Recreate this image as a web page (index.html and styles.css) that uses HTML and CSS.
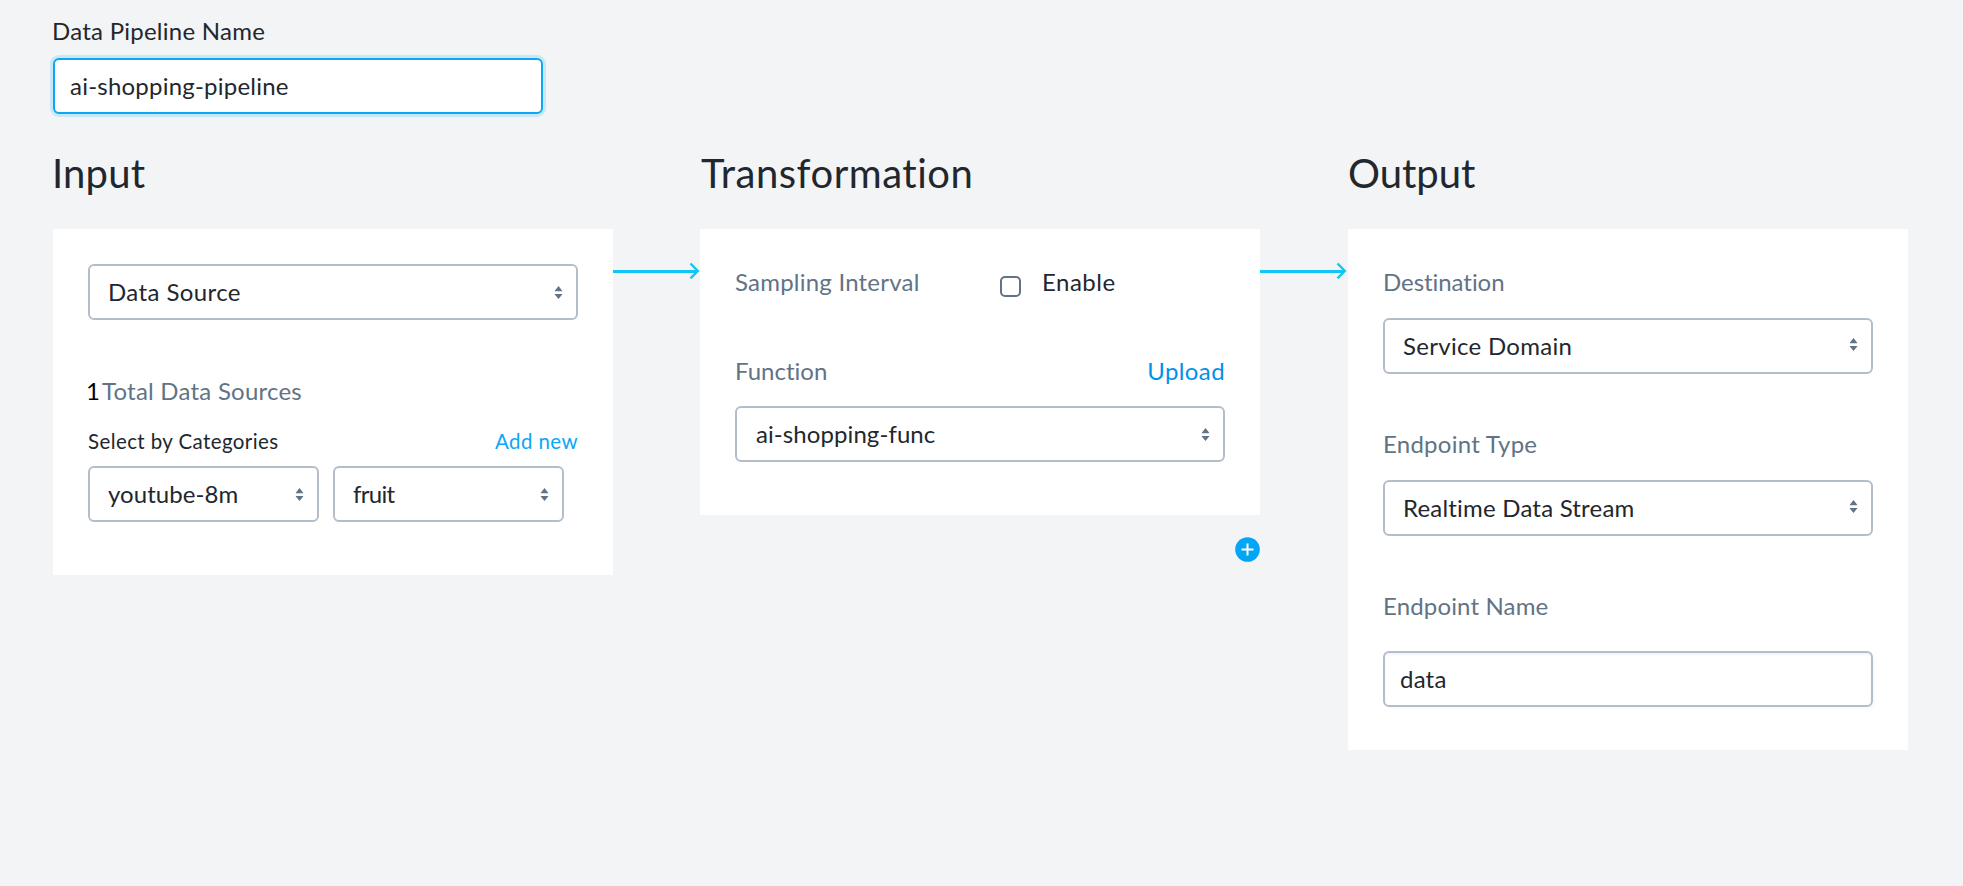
FILE: index.html
```html
<!DOCTYPE html>
<html lang="en">
<head>
<meta charset="utf-8">
<title>Data Pipeline</title>
<link rel="stylesheet" href="styles.css">
</head>
<body>
<svg class="defs" aria-hidden="true">
  <symbol id="sort" viewBox="0 0 9 15"><path d="M4.5 1 8.2 5.8V6.2H0.8V5.8ZM4.5 14 0.8 9.4V9H8.2V9.4Z"/></symbol>
  <symbol id="arrow" viewBox="0 0 87 20"><path d="M0 12.5H84" stroke-width="3"/><path d="M77.5 4.5 84.8 12 77.5 19.3" stroke-width="2.4"/></symbol>
</svg>
<main class="page">
  <label class="name-label" for="name"><span class="t-name">Data Pipeline Name</span></label>
  <div class="box focused" id="name"><span class="t-pipeline">ai-shopping-pipeline</span></div>
  <div class="columns">
    <section class="column">
      <h2 class="heading t-input">Input</h2>
      <div class="card card-input">
        <div class="box"><span class="t-source">Data Source</span><svg class="sort"><use href="#sort"/></svg></div>
        <div class="total"><span class="count">1</span><span class="t-total">Total Data Sources</span></div>
        <div class="row small"><span class="t-select">Select by Categories</span><a class="link t-add">Add new</a></div>
        <div class="pair">
          <div class="box"><span class="t-youtube">youtube-8m</span><svg class="sort"><use href="#sort"/></svg></div>
          <div class="box"><span class="t-fruit">fruit</span><svg class="sort"><use href="#sort"/></svg></div>
        </div>
      </div>
    </section>
    <svg class="arrow"><use href="#arrow"/></svg>
    <section class="column">
      <h2 class="heading t-transformation">Transformation</h2>
      <div class="card card-transform">
        <div class="sampling"><span class="label t-sampling">Sampling Interval</span><span class="checkbox"></span><span class="t-enable">Enable</span></div>
        <div class="row function"><span class="label t-function">Function</span><a class="link upload t-upload">Upload</a></div>
        <div class="box"><span class="t-func">ai-shopping-func</span><svg class="sort"><use href="#sort"/></svg></div>
      </div>
      <svg class="add" viewBox="0 0 25 25"><circle cx="12.5" cy="12.5" r="12.3"/><path d="M6.5 12.5H18.5M12.5 6.5V18.5"/></svg>
    </section>
    <svg class="arrow arrow-output"><use href="#arrow" width="87"/></svg>
    <section class="column">
      <h2 class="heading t-output">Output</h2>
      <div class="card card-output">
        <div class="label field-label"><span class="t-destination">Destination</span></div>
        <div class="box raised"><span class="t-service">Service Domain</span><svg class="sort"><use href="#sort"/></svg></div>
        <div class="label field-label"><span class="t-type">Endpoint Type</span></div>
        <div class="box raised"><span class="t-realtime">Realtime Data Stream</span><svg class="sort"><use href="#sort"/></svg></div>
        <div class="label field-label"><span class="t-endname">Endpoint Name</span></div>
        <div class="box text-input"><span class="t-data">data</span></div>
      </div>
    </section>
  </div>
</main>
</body>
</html>
```

FILE: styles.css
```css
* { box-sizing: border-box; }
body {
  margin: 0;
  background: #f2f4f6;
  color: #22272e;
  font: 24px/30px Lato, "Open Sans", sans-serif;
  font-variant-ligatures: none;
  white-space: nowrap;
}
.defs { display: none; }
.page { padding: 16px 53px 0; }
.name-label { display: block; height: 42px; }
.box {
  display: flex;
  align-items: center;
  justify-content: space-between;
  width: 490px;
  height: 56px;
  padding: 0 13px 0 18px;
  border: 2px solid #b4becb;
  border-radius: 6px;
  background: #fff;
}
.focused {
  padding-left: 15px;
  border-color: #0ba7f4;
  box-shadow: 0 0 0 3px #c9e8f7;
}
.columns { display: flex; }
.column { width: 560px; }
.heading {
  height: 115px;
  margin: 0;
  padding-top: 34px;
  font-size: 40px;
  font-weight: 400;
  line-height: 50px;
}
.card { padding: 0 35px; background: #fff; }
.card-input { height: 346px; padding-top: 35px; }
.card-transform { height: 286px; padding-top: 38px; }
.card-output { height: 521px; padding-top: 38px; }
.sort {
  width: 9px;
  height: 15px;
  fill: #627386;
}
.raised .sort { margin-top: -4px; }
.total {
  display: flex;
  height: 48px;
  margin-top: 56px;
  color: #627386;
}
.count { width: 15px; margin-left: -2px; margin-right: 1px; color: #000; }
.row { display: flex; justify-content: space-between; }
.small { height: 42px; font-size: 20.5px; line-height: 35px; letter-spacing: 0.4px; }
.link { color: #0ba7f4; }
.upload { color: #0092e8; }
.pair { display: flex; gap: 14px; }
.pair .box { width: 231px; }
.arrow {
  width: 87px;
  height: 20px;
  margin-top: 145px;
  fill: none;
  stroke: #12c5f2;
}
.arrow-output { width: 88px; }
.label { color: #627386; }
.sampling { display: flex; height: 89px; }
.sampling .label { width: 265px; }
.checkbox {
  width: 21px;
  height: 21px;
  margin: 9px 21px 0 0;
  border: 2px solid #627386;
  border-radius: 5px;
}
.function { height: 50px; }
.add {
  display: block;
  width: 25px;
  height: 25px;
  margin: 22px 0 0 auto;
  fill: #03a6f5;
}
.add path { stroke: #fff; stroke-width: 2; }
.field-label { height: 51px; }
.box + .field-label { height: 51px; margin-top: 55px; }
.box + .field-label:nth-last-child(2) { height: 60px; }
.text-input {
  padding-left: 15px;
  box-shadow: inset 0 2px 2px #f2f4f8, 3px 3px 0 -1px #f7fbfe;
}

/* Per-string tracking */
.t-name { margin-left: -1px; letter-spacing: 0.25px; }
.t-pipeline { letter-spacing: 0.22px; }
.t-input { margin-left: -1px; letter-spacing: 0.2px; }
.t-source { letter-spacing: 0.4px; }
.t-total { letter-spacing: 0.23px; }
.t-youtube { letter-spacing: 0.05px; }
.t-fruit { letter-spacing: -0.7px; }
.t-transformation { padding-left: 1px; letter-spacing: 0.52px; }
.t-sampling { letter-spacing: 0.22px; }
.t-enable { letter-spacing: 0.5px; }
.t-upload { letter-spacing: 0.4px; }
.t-func { padding-left: 1px; letter-spacing: 0.08px; }
.t-destination { letter-spacing: -0.05px; }
.t-service { letter-spacing: 0.3px; }
.t-type { letter-spacing: 0.25px; }
.t-realtime { letter-spacing: 0.2px; }
.t-endname { letter-spacing: 0.15px; }
.t-data { letter-spacing: 0.2px; }
```
